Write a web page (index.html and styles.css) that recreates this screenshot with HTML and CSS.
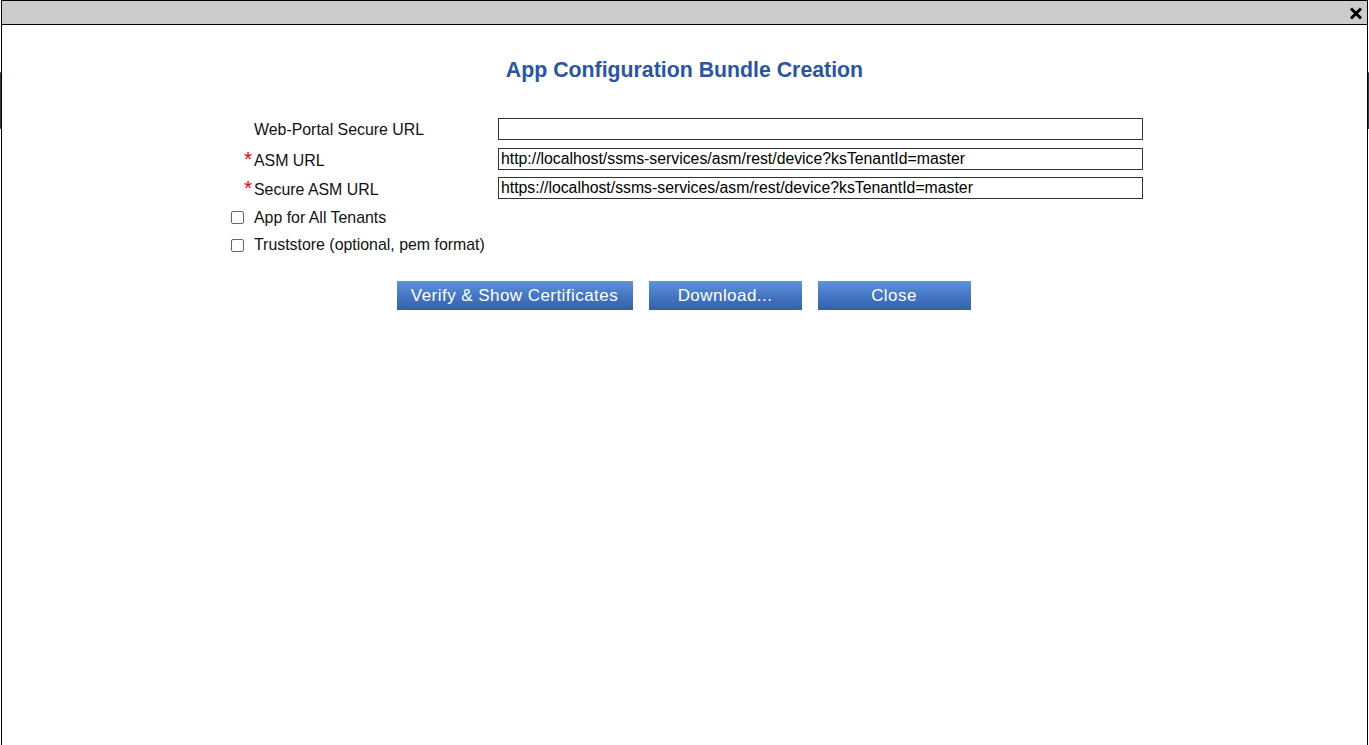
FILE: index.html
```html
<!DOCTYPE html>
<html>
<head>
<meta charset="utf-8">
<title>App Configuration Bundle Creation</title>
<link rel="stylesheet" href="styles.css">
</head>
<body>
<div class="page">
  <div class="page-top"></div>
  <div class="page-band"></div>
</div>
<div class="dialog">
  <div class="titlebar">
    <span class="close-x" aria-label="close">
      <svg width="14" height="13" viewBox="0 0 14 13"><path d="M2 1.5 L12 11.5 M12 1.5 L2 11.5" stroke="#000" stroke-width="3" stroke-linecap="butt"/></svg>
    </span>
  </div>
  <div class="content">
    <h1 class="heading">App Configuration Bundle Creation</h1>
    <div class="form">
      <div class="mark"></div>
      <div class="label">Web-Portal Secure URL</div>
      <div class="field"><input class="text" type="text" value=""></div>

      <div class="mark"><span class="req">*</span></div>
      <div class="label low">ASM URL</div>
      <div class="field"><input class="text" type="text" value="http://localhost/ssms-services/asm/rest/device?ksTenantId=master"></div>

      <div class="mark"><span class="req">*</span></div>
      <div class="label low">Secure ASM URL</div>
      <div class="field"><input class="text" type="text" value="https://localhost/ssms-services/asm/rest/device?ksTenantId=master"></div>

      <div class="mark check-row first-check"><span class="box"></span></div>
      <div class="label check-row wide first-check">App for All Tenants</div>

      <div class="mark check-row"><span class="box"></span></div>
      <div class="label check-row wide">Truststore (optional, pem format)</div>
    </div>
    <div class="buttons">
      <button class="btn btn-wide">Verify &amp; Show Certificates</button>
      <button class="btn">Download...</button>
      <button class="btn">Close</button>
    </div>
  </div>
</div>
</body>
</html>
```

FILE: styles.css
```css
html, body {
  margin: 0;
  padding: 0;
  background: #ffffff;
  font-family: "Liberation Sans", Arial, sans-serif;
  overflow: hidden;
}

.page {
  height: 745px;
  display: flex;
  flex-direction: column;
}
.page-top {
  height: 72px;
}
.page-band {
  height: 56px;
  background: #2f3a47;
  border-top: 1px solid #4a6a9a;
}

.dialog {
  position: absolute;
  left: 1px;
  top: 0;
  width: 1365px;
  height: 760px;
  border: 1px solid #000;
  background: #ffffff;
}

.titlebar {
  height: 23px;
  background: #cccccc;
  border-bottom: 1px solid #000;
  display: flex;
  justify-content: flex-end;
  align-items: center;
  padding-right: 4px;
}
.close-x {
  display: flex;
  width: 14px;
  height: 13px;
  margin-top: 1px;
}

.content {
  padding-top: 33px;
}

.heading {
  margin: 0;
  text-align: center;
  color: #2a55a0;
  font-size: 21.3px;
  font-weight: bold;
  line-height: 24px;
}

.form {
  width: 912px;
  margin: 36px 0 0 229px;
  display: grid;
  grid-template-columns: 23px 244px 645px;
  grid-auto-rows: auto;
  row-gap: 7.5px;
  align-items: center;
}

.mark {
  height: 22px;
  position: relative;
  display: flex;
  align-items: center;
}
.req {
  position: absolute;
  left: 13px;
  top: 1px;
  color: #ee0000;
  font-size: 21px;
  line-height: 20px;
}
.label {
  font-size: 15.9px;
  color: #111;
  line-height: 22px;
  white-space: nowrap;
  padding-top: 1px;
  height: 21px;
}
.label.low {
  padding-top: 2px;
  height: 20px;
}
.wide {
  grid-column: 2 / 4;
}
.check-row {
  height: 20px;
  line-height: 20px;
  padding-top: 0;
}
.first-check {
  margin-top: 1px;
}
.box {
  display: block;
  width: 11px;
  height: 11px;
  border: 1px solid #666;
  border-radius: 2px;
  background: #fff;
  margin-left: 0;
}

.field {
  display: flex;
}
.text {
  width: 645px;
  height: 22px;
  box-sizing: border-box;
  border: 1px solid #333;
  margin: 0;
  padding: 0 2px;
  font-family: "Liberation Sans", Arial, sans-serif;
  font-size: 15.8px;
  color: #000;
  background: #fff;
  outline: none;
}

.buttons {
  margin-top: 26px;
  display: flex;
  justify-content: center;
  gap: 16px;
  padding-right: 2px;
}
.btn {
  width: 153px;
  height: 29px;
  border: 0;
  margin: 0;
  padding: 0;
  background: linear-gradient(to bottom, #5f95da 0%, #4576c4 50%, #3560a8 100%);
  color: #ffffff;
  font-family: "Liberation Sans", Arial, sans-serif;
  font-size: 17px;
  letter-spacing: 0.45px;
  line-height: 29px;
}
.btn-wide {
  width: 236px;
}
```
